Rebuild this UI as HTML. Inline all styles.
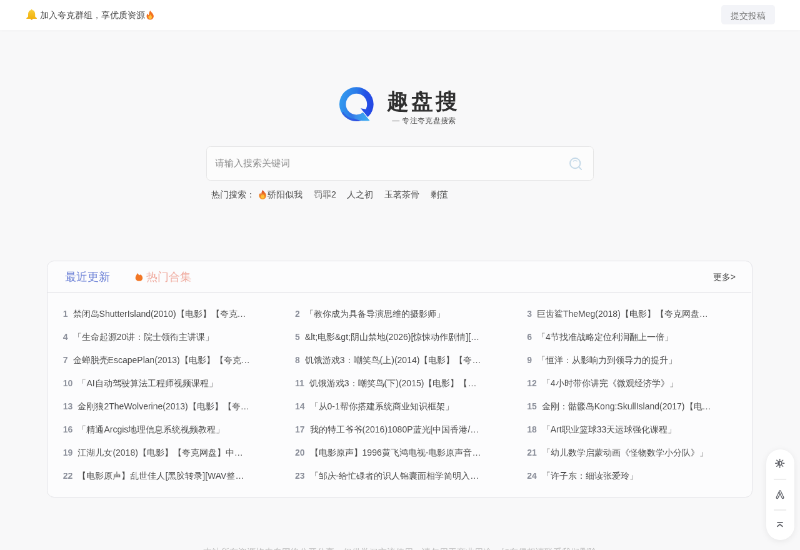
<!DOCTYPE html>
<html><head><meta charset="utf-8">
<style>
*{margin:0;padding:0;box-sizing:border-box}
html,body{width:800px;height:550px;overflow:hidden;background:#f8f8f9;font-family:"Liberation Sans",sans-serif;color:#333}
#s{position:absolute;left:0;top:0;width:1280px;height:880px;transform:scale(.625);transform-origin:0 0;will-change:transform}
.abs{position:absolute;white-space:nowrap}
.hdr{position:absolute;left:0;top:0;width:1280px;height:48px;background:#fff;box-shadow:0 1px 5px rgba(0,0,0,.03)}
.notice{left:64px;top:12.8px;font-size:14px;line-height:22px;color:#474747}
.btn{position:absolute;left:1154.4px;top:8.4px;width:85.2px;height:30.8px;background:#f3f4f8;border-radius:5px}
.btn span{position:absolute;left:15px;top:5.6px;font-size:14px;line-height:22px;color:#777;white-space:nowrap}
.title{left:618.8px;top:136px;font-size:35px;line-height:51px;color:#2e2e2e;letter-spacing:4.2px;-webkit-text-stroke:1.1px #2e2e2e}
.sub{left:627.2px;top:184px;font-size:12px;line-height:19px;color:#555;letter-spacing:.35px}
.search{position:absolute;left:330.4px;top:234.4px;width:619.2px;height:54.4px;background:#fcfcfc;border:1.6px solid #e6e6e6;border-radius:6.4px}
.ph{left:344px;top:250.3px;font-size:15px;line-height:22px;color:#8f8f8f}
.hot{left:338.4px;top:300px;font-size:14px;line-height:22px;color:#4d4d4d}
.hot i{font-style:normal;margin-left:17.6px}
.card{position:absolute;left:74.8px;top:417.2px;width:1128.8px;height:378.4px;background:#fcfcfd;border:1.6px solid #e3e3e7;border-radius:11.2px}
.divider{position:absolute;left:76px;top:467.2px;width:1126.4px;height:1.6px;background:#ededf0}
.tab1{left:104px;top:431.3px;font-size:18px;line-height:25.6px;color:#687ed6}
.tab2{left:233.6px;top:431.3px;font-size:18px;line-height:25.6px;color:#f0aa9e}
.more{left:1140.8px;top:432px;font-size:14px;line-height:22px;color:#4a4a4a}
.item{position:absolute;font-size:14px;line-height:22px;color:#4d4d4d;white-space:nowrap}
.item b{font-weight:bold;color:#8d919c;margin-right:8px}
.side{position:absolute;left:1225.6px;top:719px;width:45.6px;height:145px;background:#fff;border-radius:22.8px;box-shadow:0 2px 12px rgba(0,0,0,.08)}
.sdiv{position:absolute;left:1238.4px;width:19.2px;height:1.6px;background:#eee}
.foot{left:324.8px;top:872.3px;font-size:14px;line-height:22px;color:#bdbdbd}
</style></head><body><div id="s">
<div class="hdr"></div>
<svg class="abs" style="left:40.8px;top:14.4px" width="19.2" height="19.2" viewBox="0 0 12 12">
 <defs><linearGradient id="bg1" x1="0" y1="0" x2="0" y2="1"><stop offset="0" stop-color="#f9cf3a"/><stop offset="1" stop-color="#f2b10e"/></linearGradient></defs>
 <path d="M6 .6c.4 0 .6.3.6.6 1.9.4 2.9 2.1 2.9 4.1v2.2c0 .7.7 1.2 1.5 1.7.4.3.3.8-.2.8H1.2c-.5 0-.6-.5-.2-.8.8-.5 1.5-1 1.5-1.7V5.3c0-2 1-3.7 2.9-4.1 0-.3.2-.6.6-.6z" fill="url(#bg1)"/>
 <path d="M4.9 10h2.2a1.1 1.1 0 0 1-2.2 0z" fill="#e09a10"/>
</svg>
<div class="abs notice">加入夸克群组，享优质资源</div>
<svg class="abs" style="left:232.6px;top:16px" width="14.4" height="15.6" viewBox="0 0 10 11">
 <path d="M5 0.5C6 2.5 9 4 9 7a4 4 0 0 1-8 0c0-1.5.8-2.5 1.5-3 0 1 .5 1.6 1 1.8C3.5 3.8 4.2 2 5 .5z" fill="#f4711f"/>
 <path d="M5 5c.8 1 2 1.8 2 3a2 2 0 0 1-4 0c0-1 .6-1.6 1-2 .1.6.3.8.6.9C4.5 6.3 4.7 5.6 5 5z" fill="#ffc23a"/>
</svg>
<div class="btn"><span>提交投稿</span></div>

<svg class="abs" style="left:542.4px;top:139.2px" width="57.6" height="57.6" viewBox="0 0 36 36">
 <defs>
  <linearGradient id="qg" x1="0" y1="0.35" x2="1" y2="0.55">
   <stop offset="0" stop-color="#339cef"/>
   <stop offset="0.45" stop-color="#2b7ae9"/>
   <stop offset="0.7" stop-color="#2452e6"/>
   <stop offset="1" stop-color="#2447e4"/>
  </linearGradient>
  <linearGradient id="qc" x1="0" y1="0" x2="1" y2="0">
   <stop offset="0" stop-color="#3a52dc" stop-opacity=".2"/>
   <stop offset="0.35" stop-color="#3a8cec"/>
   <stop offset="1" stop-color="#3cb2f3"/>
  </linearGradient>
 </defs>
 <path d="M17.7 0.2A17.1 17.1 0 1 1 17.7 34.4A17.1 17.1 0 1 1 17.7 0.2zM17.7 6.7A10.6 10.6 0 1 0 17.7 27.9A10.6 10.6 0 1 0 17.7 6.7z" fill="url(#qg)" fill-rule="evenodd"/>
 <path d="M3.8 25.5A16.1 16.1 0 0 0 20 33.2" fill="none" stroke="#3540da" stroke-width="2" opacity=".5"/>
 <path d="M8.52 22.6A10.6 10.6 0 0 0 24.62 25.33L31.6 33.8C26 34.2 12 35 8.52 22.6Z" fill="url(#qc)"/>
 <path d="M21.3 21.3L27.1 22.3L31 24L28.75 30.35Z" fill="#2550e6"/>
 <path d="M21.3 21.3L31.6 33.8" stroke="#fbfbfd" stroke-width=".8"/>
</svg>
<div class="abs title">趣盘搜</div>
<div class="abs sub">— 专注夸克盘搜索</div>

<div class="search"></div>
<div class="abs ph">请输入搜索关键词</div>
<svg class="abs" style="left:908.8px;top:249.6px" width="25.6" height="25.6" viewBox="0 0 16 16">
 <circle cx="7" cy="7" r="5.1" fill="none" stroke="#c4d9e8" stroke-width="1.15"/>
 <path d="M4.9 5.1a3 3 0 0 1 4.2 0" fill="none" stroke="#c4d9e8" stroke-width=".9"/>
 <path d="M10.7 10.7L13.2 13.2" stroke="#c4d9e8" stroke-width="1.15" stroke-linecap="round"/>
</svg>
<div class="abs hot">热门搜索：<svg style="vertical-align:-3px;margin-left:4.2px;margin-right:1.4px" width="14.4" height="16" viewBox="0 0 10 11"><defs><linearGradient id="fg2" x1="0" y1="0" x2="0" y2="1"><stop offset="0" stop-color="#d8452a"/><stop offset=".5" stop-color="#f07a22"/><stop offset="1" stop-color="#f39a2a"/></linearGradient></defs><path d="M5 0.5C6 2.5 9 4 9 7a4 4 0 0 1-8 0c0-1.5.8-2.5 1.5-3 0 1 .5 1.6 1 1.8C3.5 3.8 4.2 2 5 .5z" fill="url(#fg2)"/><path d="M5 5c.8 1 2 1.8 2 3a2 2 0 0 1-4 0c0-1 .6-1.6 1-2 .1.6.3.8.6.9C4.5 6.3 4.7 5.6 5 5z" fill="#ffc23a"/></svg>骄阳似我<i>罚罪2</i><i>人之初</i><i>玉茗茶骨</i><i>剩菹</i></div>

<div class="card"></div>
<div class="divider"></div>
<div class="abs tab1">最近更新</div>
<svg class="abs" style="left:216px;top:435.5px" width="12.8" height="14.4" viewBox="0 0 8 9"><path d="M2.4 .6C3.4 1.4 3.8 2.3 4 3C4.5 2.3 5.3 2 5.9 2.2C7.1 3.3 7.7 4.5 7.6 5.9C7.4 7.7 5.9 8.5 4.1 8.5C2.1 8.5.4 7.4.4 5.3C.4 3.5 1.7 2.3 2.4.6Z" fill="#f27624"/></svg>
<div class="abs tab2">热门合集</div>
<div class="abs more">更多&gt;</div>
<div class="item" style="left:100.8px;top:491.40px"><b>1</b>禁闭岛ShutterIsland(2010)【电影】【夸克…</div>
<div class="item" style="left:472.0px;top:491.40px"><b>2</b>「教你成为具备导演思维的摄影师」</div>
<div class="item" style="left:843.1999999999999px;top:491.40px"><b>3</b>巨齿鲨TheMeg(2018)【电影】【夸克网盘…</div>
<div class="item" style="left:100.8px;top:528.37px"><b>4</b>「生命起源20讲：院士领衔主讲课」</div>
<div class="item" style="left:472.0px;top:528.37px"><b>5</b>&amp;lt;电影&amp;gt;阴山禁地(2026)[惊悚动作剧情][…</div>
<div class="item" style="left:843.1999999999999px;top:528.37px"><b>6</b>「4节找准战略定位利润翻上一倍」</div>
<div class="item" style="left:100.8px;top:565.34px"><b>7</b>金蝉脱壳EscapePlan(2013)【电影】【夸克…</div>
<div class="item" style="left:472.0px;top:565.34px"><b>8</b>饥饿游戏3：嘲笑鸟(上)(2014)【电影】【夸…</div>
<div class="item" style="left:843.1999999999999px;top:565.34px"><b>9</b>「恒洋：从影响力到领导力的提升」</div>
<div class="item" style="left:100.8px;top:602.31px"><b>10</b>「AI自动驾驶算法工程师视频课程」</div>
<div class="item" style="left:472.0px;top:602.31px"><b>11</b>饥饿游戏3：嘲笑鸟(下)(2015)【电影】【…</div>
<div class="item" style="left:843.1999999999999px;top:602.31px"><b>12</b>「4小时带你讲完《微观经济学》」</div>
<div class="item" style="left:100.8px;top:639.28px"><b>13</b>金刚狼2TheWolverine(2013)【电影】【夸…</div>
<div class="item" style="left:472.0px;top:639.28px"><b>14</b>「从0-1帮你搭建系统商业知识框架」</div>
<div class="item" style="left:843.1999999999999px;top:639.28px"><b>15</b>金刚：骷髅岛Kong:SkullIsland(2017)【电…</div>
<div class="item" style="left:100.8px;top:676.25px"><b>16</b>「精通Arcgis地理信息系统视频教程」</div>
<div class="item" style="left:472.0px;top:676.25px"><b>17</b>我的特工爷爷(2016)1080P蓝光[中国香港/…</div>
<div class="item" style="left:843.1999999999999px;top:676.25px"><b>18</b>「Art职业篮球33天运球强化课程」</div>
<div class="item" style="left:100.8px;top:713.22px"><b>19</b>江湖儿女(2018)【电影】【夸克网盘】中…</div>
<div class="item" style="left:472.0px;top:713.22px"><b>20</b>【电影原声】1996黄飞鸿电视-电影原声音…</div>
<div class="item" style="left:843.1999999999999px;top:713.22px"><b>21</b>「幼儿数学启蒙动画《怪物数学小分队》」</div>
<div class="item" style="left:100.8px;top:750.19px"><b>22</b>【电影原声】乱世佳人[黑胶转录][WAV整…</div>
<div class="item" style="left:472.0px;top:750.19px"><b>23</b>「邹庆-给忙碌者的识人锦囊面相学简明入…</div>
<div class="item" style="left:843.1999999999999px;top:750.19px"><b>24</b>「许子东：细读张爱玲」</div>

<div class="side"></div>
<div class="sdiv" style="top:766.4px"></div>
<div class="sdiv" style="top:815.2px"></div>
<svg class="abs" style="left:1240px;top:734.4px" width="16" height="16" viewBox="0 0 10 10">
 <circle cx="4.8" cy="4.5" r="2" fill="none" stroke="#5f6168" stroke-width=".9"/>
 <path d="M4.8 2.5A2 2 0 0 0 4.8 6.5z" fill="#5f6168"/>
 <path d="M7.95 4.50L9.20 4.50M7.03 6.73L7.91 7.61M4.80 7.65L4.80 8.90M2.57 6.73L1.69 7.61M1.65 4.50L0.40 4.50M2.57 2.27L1.69 1.39M4.80 1.35L4.80 0.10M7.03 2.27L7.91 1.39" stroke="#5f6168" stroke-width=".9" stroke-linecap="round"/>
</svg>
<svg class="abs" style="left:1240px;top:784px" width="16" height="16" viewBox="0 0 10 10">
 <path d="M5 1.6L2.2 7.6" stroke="#5f6168" stroke-width="2.5" stroke-linecap="round"/>
 <path d="M5 1.6L2.2 7.6" stroke="#fff" stroke-width=".9" stroke-linecap="round"/>
 <path d="M5 1.6L7.8 7.6" stroke="#5f6168" stroke-width="2.5" stroke-linecap="round"/>
 <path d="M5 1.6L7.8 7.6" stroke="#fff" stroke-width=".9" stroke-linecap="round"/>
</svg>
<svg class="abs" style="left:1240px;top:832px" width="16" height="16" viewBox="0 0 10 10">
 <path d="M2.1 2.5h5.8" stroke="#5f6168" stroke-width="1.1"/>
 <path d="M2.4 6.4L4.9 4.3L7.4 6.4" fill="none" stroke="#5f6168" stroke-width="1.1" stroke-linecap="round"/>
</svg>
<div class="abs foot">本站所有资源均来自网络公开分享，仅供学习交流使用，请勿用于商业用途，如有侵权请联系我们删除</div>
</div></body></html>
